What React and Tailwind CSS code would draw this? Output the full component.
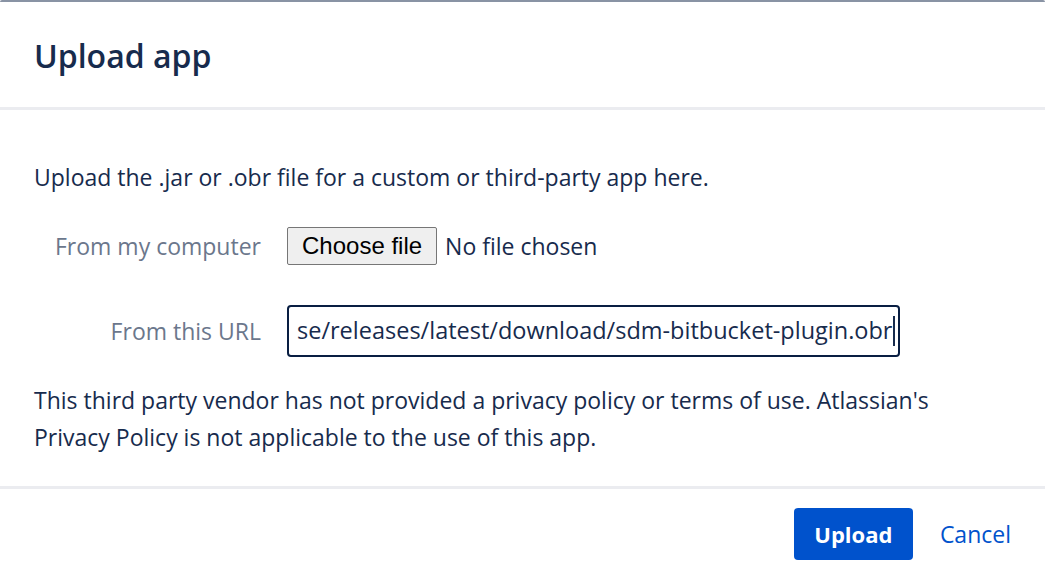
import React from 'react';

const font = { fontFamily: '"Open Sans", "Noto Sans", sans-serif' };

export default function App() {
    return (
        <div className="w-[1045px] h-[574px] bg-white overflow-hidden text-[#172b4d]" style={font}>
            <div className="h-[2px] bg-[#8993a4] rounded-t-[3px]" />

            <div className="h-[108px] flex items-center px-[34px] border-b-[3px] border-[#ebecf0]">
                <h2 className="text-[32px] font-semibold leading-none pt-[2px]">Upload app</h2>
            </div>

            <div className="h-[376px] px-[34px] pt-[49px]">
                <p className="text-[23px] leading-[36px]">
                    Upload the .jar or .obr file for a custom or third-party app here.
                </p>

                <div className="flex items-center h-[38px] mt-[32px]">
                    <label className="w-[227px] text-right text-[23px] text-[#6b778c]">From my computer</label>
                    <div className="flex items-center ml-[26px]">
                        <button
                            className="h-[38px] px-[14px] bg-[#efefef] border border-[#767676] rounded-[2px] text-black text-[24px]"
                            style={{ fontFamily: '"Liberation Sans", Arial, sans-serif' }}
                        >
                            Choose file
                        </button>
                        <span className="ml-[8px] text-[23px]">No file chosen</span>
                    </div>
                </div>

                <div className="flex items-center h-[52px] mt-[40px]">
                    <label className="w-[227px] text-right text-[23px] text-[#6b778c]">From this URL</label>
                    <div className="ml-[26px] w-[613px] h-[52px] border-2 border-[#091e42] rounded-[4px] flex items-center px-[8px] overflow-hidden">
                        <span className="text-[23.5px] whitespace-nowrap">se/releases/latest/download/sdm-bitbucket-plugin.obr</span>
                        <span className="w-[2px] h-[30px] bg-[#172b4d] ml-[1px] shrink-0" />
                    </div>
                </div>

                <p className="text-[23px] leading-[37px] mt-[25px] w-[930px]">
                    This third party vendor has not provided a privacy policy or terms of use. Atlassian's
                    Privacy Policy is not applicable to the use of this app.
                </p>
            </div>

            <div className="h-[88px] border-t-[3px] border-[#ebecf0] flex justify-end items-start pt-[19px] pr-[34px]">
                <button className="h-[52px] w-[119px] bg-[#0052cc] text-white font-bold text-[22px] rounded-[4px]">
                    Upload
                </button>
                <button className="h-[52px] ml-[27px] text-[#0052cc] text-[23px]">Cancel</button>
            </div>
        </div>
    );
}
